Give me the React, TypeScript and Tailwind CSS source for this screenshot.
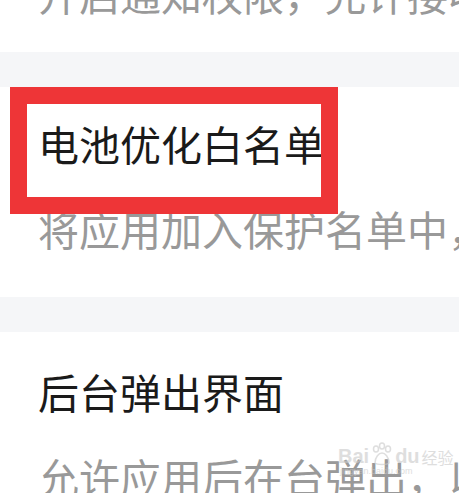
const cjk = "font-['Noto_Sans_CJK_SC','Noto_Sans',sans-serif]";

const Band = () => <div className="h-[35px] bg-[#f5f6f8]" />;

const Item = ({ title, desc, top }: { title: string; desc: string; top: string }) => (
  <div className={`pl-[38px] ${top} pb-[48px]`}>
    <div className="text-[41px] leading-[41px] text-[#1a1a1a] whitespace-nowrap">{title}</div>
    <div className="mt-[44px] text-[41px] leading-[41px] text-[#999999] whitespace-nowrap">{desc}</div>
  </div>
);

const Watermark = () => (
  <div className="absolute left-[338px] top-[442px] flex flex-col items-start opacity-60 pointer-events-none">
    <div className="flex items-end gap-[2px] text-[#c9c9c9]">
      <span className="font-['Liberation_Sans',sans-serif] text-[20px] leading-[20px] font-bold">Bai</span>
      <svg width="22" height="24" viewBox="0 0 22 24" fill="none" stroke="#c9c9c9" strokeWidth="1.5">
        <ellipse cx="5" cy="7" rx="2.5" ry="3" />
        <ellipse cx="11" cy="4" rx="2.5" ry="3" />
        <ellipse cx="17" cy="7" rx="2.5" ry="3" />
        <path d="M4 21c0-6 4-10 7-10s7 4 7 10c-2 2-12 2-14 0z" />
      </svg>
      <span className="font-['Liberation_Sans',sans-serif] text-[20px] leading-[20px] font-bold">du</span>
      <span className={`${cjk} text-[16px] leading-[18px]`}>经验</span>
    </div>
    <span className="font-['Liberation_Sans',sans-serif] text-[9px] leading-[10px] text-[#c9c9c9] ml-[2px]">jingyan.baidu.com</span>
  </div>
);

export default function App() {
  return (
    <div className={`relative w-[459px] h-[493px] overflow-hidden bg-white ${cjk}`}>
      <div className="pl-[38px] mt-[-27px] pb-[38px] text-[41px] leading-[41px] text-[#999999] whitespace-nowrap">
        开启通知权限，允许接收通知
      </div>
      <Band />
      <Item top="pt-[36px]" title="电池优化白名单" desc="将应用加入保护名单中，防止" />
      <Band />
      <Item top="pt-[39px]" title="后台弹出界面" desc="允许应用后在台弹出，以便" />
      <div className="absolute left-[10px] top-[87px] w-[328px] h-[127px] border-[17px] border-[#ee3537]" />
      <Watermark />
    </div>
  );
}
